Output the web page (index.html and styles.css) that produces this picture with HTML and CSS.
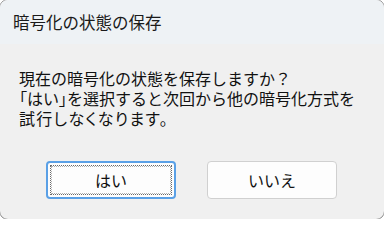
FILE: index.html
```html
<!DOCTYPE html>
<html lang="ja">
<head>
<meta charset="utf-8">
<link rel="stylesheet" href="styles.css">
</head>
<body>
<div class="window">
  <div class="titlebar">暗号化の状態の保存</div>
  <div class="content">
    <p class="message">
      <span class="line">現在の暗号化の状態を保存しますか？</span>
      <span class="line"><span class="bracket">「</span>はい<span class="bracket">」</span>を選択すると次回から他の暗号化方式を</span>
      <span class="line narrow">試行しなくなります。</span>
    </p>
    <div class="buttons">
      <button class="btn default"><span class="focus">はい</span></button>
      <button class="btn">いいえ</button>
    </div>
  </div>
</div>
</body>
</html>
```
FILE: styles.css
```css
html, body {
  margin: 0;
  padding: 0;
  background: #ffffff;
  overflow: hidden;
}
body {
  width: 384px;
  height: 219px;
  font-family: "Noto Sans CJK JP", "Noto Sans", sans-serif;
  color: #111111;
}
.window {
  margin: -1px;
  width: 384px;
  height: 219px;
  border: 1px solid #8c8c8c;
  border-radius: 9px;
  overflow: hidden;
  background: #f0f0f0;
  display: flex;
  flex-direction: column;
}
.titlebar {
  height: 44px;
  flex: none;
  background: #eef2f5;
  display: flex;
  align-items: center;
  padding-left: 13px;
  font-size: 16.5px;
  color: #1a1a1a;
}
.content {
  padding: 24px 0 0 19px;
}
.message {
  margin: 0;
  font-size: 16px;
  line-height: 20px;
}
.line {
  display: block;
  height: 20px;
  white-space: nowrap;
}
.bracket {
  font-feature-settings: "palt" 1;
}
.narrow {
  font-feature-settings: "palt" 1;
  letter-spacing: 1.3px;
}
.buttons {
  display: flex;
  gap: 31px;
  margin-top: 33px;
  padding-left: 27px;
}
.btn {
  width: 130px;
  height: 38px;
  box-sizing: border-box;
  border: 1px solid #d0d0d0;
  border-radius: 4px;
  background: #fdfdfd;
  font-family: "Noto Sans CJK JP", sans-serif;
  font-size: 16px;
  color: #111111;
  padding: 0;
  display: flex;
  align-items: center;
  justify-content: center;
}
.btn.default {
  border: 2px solid #5aa0e6;
  padding: 2px;
}
.focus {
  flex: 1;
  align-self: stretch;
  display: flex;
  align-items: center;
  justify-content: center;
  border: 1px dotted #6a6a6a;
  outline: 1px dotted #b0b0b0;
  outline-offset: -2px;
}
```
